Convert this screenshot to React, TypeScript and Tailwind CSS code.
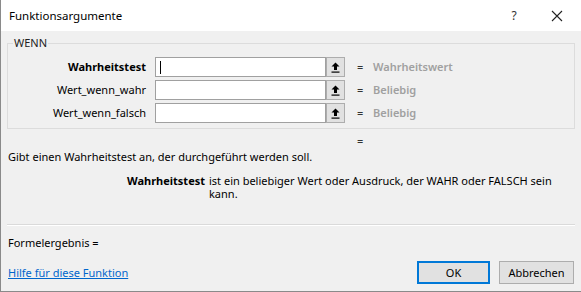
import React from "react";

function UpButton() {
  return (
    <div className="w-[19px] h-[20px] border border-[#adadad] bg-[#e1e1e1] flex items-center justify-center">
      <svg width="9" height="11" viewBox="0 0 9 11">
        <path d="M4.5 0.5 L8.5 4.5 L6 4.5 L6 8 L3 8 L3 4.5 L0.5 4.5 Z" fill="#000" />
        <rect x="0.5" y="9.5" width="8" height="1.2" fill="#000" />
      </svg>
    </div>
  );
}

function Row({ label, bold, value, cursor }: { label: string; bold?: boolean; value: string; cursor?: boolean }) {
  return (
    <div className="flex items-center h-[20px]">
      <div className={`w-[137px] text-right whitespace-nowrap ${bold ? "font-bold" : ""}`}>{label}</div>
      <div className="ml-[9px] w-[171px] h-[20px] border border-[#a0a0a0] bg-white flex items-center pl-[4px]">
        {cursor && <div className="w-px h-[13px] bg-black" />}
      </div>
      <UpButton />
      <div className="ml-[12px] w-[6px] text-[#333]">=</div>
      <div className="ml-[10px] text-[#a0a0a0] font-semibold">{value}</div>
    </div>
  );
}

export default function App() {
  return (
    <div
      className="w-[581px] h-[292px] overflow-hidden bg-[#f0f0f0] text-[11px] text-black border-l border-b border-[#8a8a8a] flex flex-col leading-[14px]"
      style={{ fontFamily: '"Noto Sans", "Open Sans", sans-serif' }}
    >
      <div className="h-[31px] bg-white flex items-center shrink-0">
        <div className="pl-[8px] flex-1 text-[11.5px]">Funktionsargumente</div>
        <div className="w-[20px] text-center mr-[27px] text-[12px] text-[#333]">?</div>
        <svg width="12" height="12" viewBox="0 0 12 12" className="mr-[18px]">
          <path d="M1 1 L11 11 M11 1 L1 11" stroke="#222" strokeWidth="1.1" />
        </svg>
      </div>
      <div className="flex-1 flex flex-col px-[6px]">
        <fieldset className="mt-[5px] border border-[#dcdcdc] h-[93px] pl-[1px] shrink-0">
          <legend className="ml-[4px] px-[1px] text-[#222]">WENN</legend>
          <div className="mt-[7px] flex flex-col gap-[3px]">
            <Row label="Wahrheitstest" bold value="Wahrheitswert" cursor />
            <Row label="Wert_wenn_wahr" value="Beliebig" />
            <Row label="Wert_wenn_falsch" value="Beliebig" />
          </div>
        </fieldset>
        <div className="ml-[350px] mt-[5px] h-[14px] text-[#333]">=</div>
        <div className="mt-[2px] h-[14px] pl-[1px]">Gibt einen Wahrheitstest an, der durchgeführt werden soll.</div>
        <div className="mt-[10px] flex h-[26px]">
          <div className="w-[198px] text-right font-bold leading-[13px]">Wahrheitstest</div>
          <div className="ml-[4px] w-[345px] leading-[13px]">
            ist ein beliebiger Wert oder Ausdruck, der WAHR oder FALSCH sein kann.
          </div>
        </div>
        <div className="mt-[24px] border-t border-[#dadada] border-b border-b-white" />
        <div className="mt-[10px] h-[14px] pl-[1px]">Formelergebnis =</div>
        <div className="mt-[11px] flex items-center pl-[1px]">
          <a className="text-[#0066cc] underline flex-1" href="#">Hilfe für diese Funktion</a>
          <div className="w-[73px] h-[23px] border-2 border-[#0078d7] bg-[#e1e1e1] flex items-center justify-center mr-[9px]">OK</div>
          <div className="w-[75px] h-[23px] border border-[#adadad] bg-[#e1e1e1] flex items-center justify-center mr-[1px]">Abbrechen</div>
        </div>
      </div>
    </div>
  );
}
